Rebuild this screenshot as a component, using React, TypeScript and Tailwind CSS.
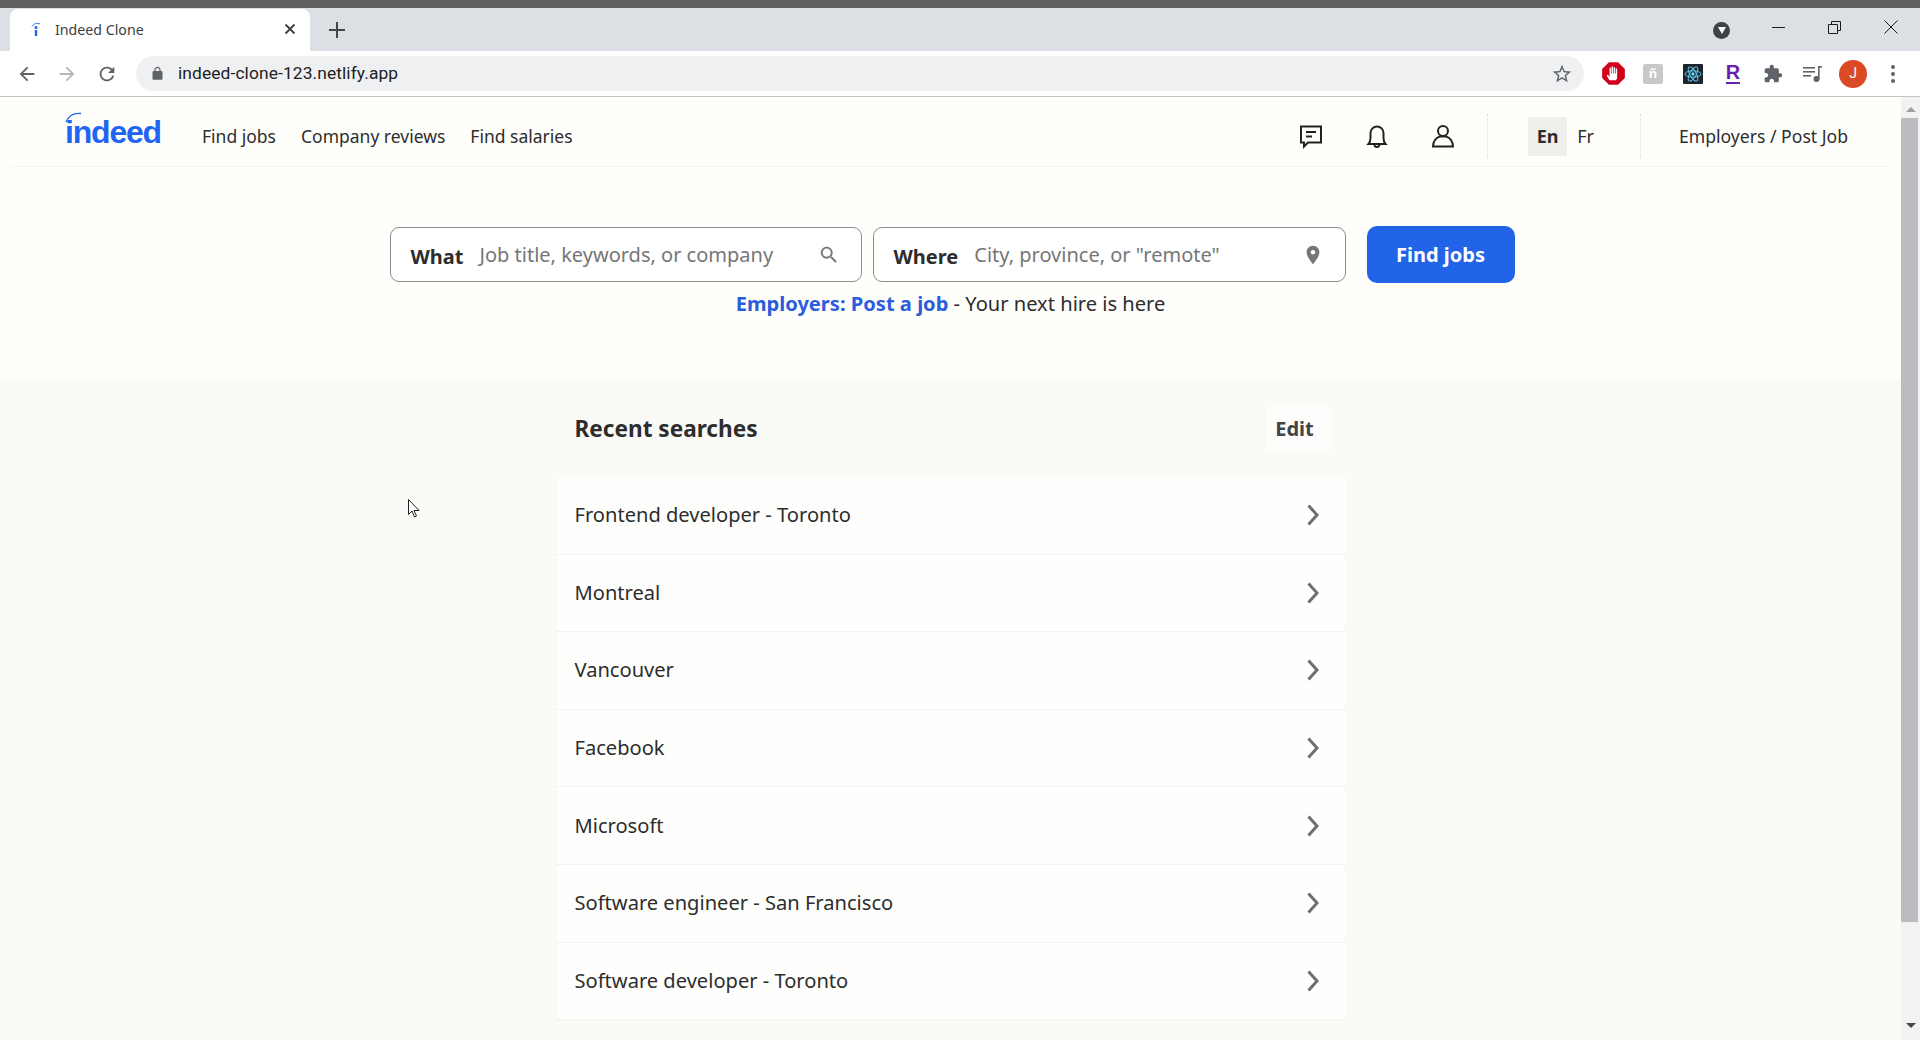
import React from 'react';

const RECENT = [
  'Frontend developer - Toronto',
  'Montreal',
  'Vancouver',
  'Facebook',
  'Microsoft',
  'Software engineer - San Francisco',
  'Software developer - Toronto',
];

function Icon({ d, className, fill = 'currentColor' }: { d: string; className?: string; fill?: string }) {
  return (
    <svg viewBox="0 0 24 24" className={className} fill={fill}>
      <path d={d} />
    </svg>
  );
}

const ARROW_BACK = 'M20 11H7.83l5.59-5.59L12 4l-8 8 8 8 1.41-1.41L7.83 13H20v-2z';
const ARROW_FORWARD = 'M4 11h12.17l-5.59-5.59L12 4l8 8-8 8-1.41-1.41L16.17 13H4v-2z';
const REFRESH =
  'M17.65 6.35C16.2 4.9 14.21 4 12 4c-4.42 0-7.99 3.58-7.99 8s3.57 8 7.99 8c3.73 0 6.84-2.55 7.73-6h-2.08c-.82 2.33-3.04 4-5.65 4-3.31 0-6-2.69-6-6s2.69-6 6-6c1.66 0 3.14.69 4.22 1.78L13 11h7V4l-2.35 2.35z';
const LOCK =
  'M18 8h-1V6c0-2.76-2.24-5-5-5S7 3.24 7 6v2H6c-1.1 0-2 .9-2 2v10c0 1.1.9 2 2 2h12c1.1 0 2-.9 2-2V10c0-1.1-.9-2-2-2zM9 6c0-1.66 1.34-3 3-3s3 1.34 3 3v2H9V6z';
const PUZZLE =
  'M20.5 11H19V7c0-1.1-.9-2-2-2h-4V3.5C13 2.12 11.88 1 10.5 1S8 2.12 8 3.5V5H4c-1.1 0-1.99.9-1.99 2v3.8H3.5c1.49 0 2.7 1.21 2.7 2.7s-1.21 2.7-2.7 2.7H2V20c0 1.1.9 2 2 2h3.8v-1.5c0-1.49 1.21-2.7 2.7-2.7 1.49 0 2.7 1.21 2.7 2.7V22H17c1.1 0 2-.9 2-2v-4h1.5c1.38 0 2.5-1.12 2.5-2.5S21.88 11 20.5 11z';
const SEARCH =
  'M15.5 14h-.79l-.28-.27C15.41 12.59 16 11.11 16 9.5 16 5.91 13.09 3 9.5 3S3 5.91 3 9.5 5.91 16 9.5 16c1.61 0 3.09-.59 4.23-1.57l.27.28v.79l5 4.99L20.49 19l-4.99-5zm-6 0C7.01 14 5 11.99 5 9.5S7.01 5 9.5 5 14 7.01 14 9.5 11.99 14 9.5 14z';
const PLACE =
  'M12 2C8.13 2 5 5.13 5 9c0 5.25 7 13 7 13s7-7.75 7-13c0-3.87-3.13-7-7-7zm0 9.5c-1.38 0-2.5-1.12-2.5-2.5s1.12-2.5 2.5-2.5 2.5 1.12 2.5 2.5-1.12 2.5-2.5 2.5z';
const STAR =
  'M22 9.24l-7.19-.62L12 2 9.19 8.63 2 9.24l5.46 4.73L5.82 21 12 17.27 18.18 21l-1.63-7.03L22 9.24zM12 15.4l-3.76 2.27 1-4.28-3.32-2.88 4.38-.38L12 6.1l1.71 4.04 4.38.38-3.32 2.88 1 4.28L12 15.4z';

function TabStrip() {
  return (
    <div className="flex h-[43px] bg-[#dcdfe3]">
      <div className="ml-[10px] mt-[1px] flex h-[42px] w-[300px] items-center rounded-t-lg bg-white pl-[18px] pr-[14px]">
        <svg viewBox="0 0 16 16" className="h-4 w-4 -translate-y-[1px]">
          <path d="M4 5.5C5.5 2.5 9 1.5 12 3" fill="none" stroke="#2164f3" strokeWidth="1" />
          <circle cx="8" cy="6.5" r="1.6" fill="#2164f3" />
          <rect x="6.8" y="9" width="2.4" height="6" fill="#2164f3" />
        </svg>
        <span className="ml-[11px] flex-1 font-['Noto_Sans',sans-serif] text-[14.2px] text-[#3c4043]">Indeed Clone</span>
        <svg viewBox="0 0 12 12" className="h-[12px] w-[12px] -translate-y-[1px] text-[#3c4043]" stroke="currentColor" strokeWidth="1.8">
          <path d="M1.5 1.5l9 9M10.5 1.5l-9 9" />
        </svg>
      </div>
      <svg viewBox="0 0 16 16" className="ml-[19px] mt-[14px] h-[16px] w-[16px] text-[#45474a]" stroke="currentColor" strokeWidth="2">
        <path d="M8 0v16M0 8h16" />
      </svg>
      <div className="flex-1" />
      <div className="mr-[190px] mt-[14px] flex h-[17px] w-[17px] items-center justify-center rounded-full bg-[#3f4244]">
        <div className="h-0 w-0 border-x-[4.5px] border-t-[7px] border-x-transparent border-t-white" />
      </div>
      <WindowControls />
    </div>
  );
}

function WindowControls() {
  return (
    <div className="absolute right-[22px] top-[20px] flex items-center gap-[43px] text-[#1c1c1c]">
      <div className="h-[1px] w-[13px] bg-current" />
      <svg viewBox="0 0 13 13" className="h-[13px] w-[13px]" fill="none" stroke="currentColor" strokeWidth="1">
        <path d="M.5 3.5h9v9h-9zM3.5 3.5v-3h9v9h-3" />
      </svg>
      <svg viewBox="0 0 14 14" className="h-[14px] w-[14px]" fill="none" stroke="currentColor" strokeWidth="1">
        <path d="M.5.5l13 13M13.5.5l-13 13" />
      </svg>
    </div>
  );
}

function ToolBtn({ children }: { children: React.ReactNode }) {
  return <div className="flex h-[40px] w-[40px] items-center justify-center">{children}</div>;
}

function Toolbar() {
  return (
    <div className="flex h-[46px] items-center border-b border-b-[#c4c4c4] bg-white pl-[7px] pr-[7px]">
      <ToolBtn><Icon d={ARROW_BACK} className="h-[22px] w-[22px] text-[#5f6368]" /></ToolBtn>
      <ToolBtn><Icon d={ARROW_FORWARD} className="h-[22px] w-[22px] text-[#b4b6b9]" /></ToolBtn>
      <ToolBtn><Icon d={REFRESH} className="h-[22px] w-[22px] text-[#5f6368]" /></ToolBtn>
      <div className="ml-[9px] flex h-[35px] w-[1448px] items-center rounded-full bg-[#eff0f1] pl-[14px] pr-[11px]">
        <Icon d={LOCK} className="h-[15px] w-[15px] text-[#5f6368]" />
        <span className="ml-[13px] flex-1 font-['Roboto',sans-serif] text-[17.4px] tracking-[0.1px] text-[#202124]">indeed-clone-123.netlify.app</span>
        <Icon d={STAR} className="h-[22px] w-[22px] text-[#5f6368]" />
      </div>
      <div className="ml-[9px] flex">
        <ToolBtn>
          <svg viewBox="0 0 22 22" className="h-[25px] w-[25px]">
            <path d="M7 1h8l6 6v8l-6 6H7l-6-6V7z" fill="#d0021b" />
            <path d="M7.5 17c-1-1.500-2-3-2.500-4.500l1-.5 1.500 2V6h1.200v5h.6V4.800h1.300V11h.6V5.400h1.200V11h.6V6.500h1.200V14c0 1.500-.6 2.300-1.200 3z" fill="#fff" />
          </svg>
        </ToolBtn>
        <ToolBtn>
          <div className="flex h-[20px] w-[20px] items-center justify-center rounded-[2px] bg-[#c8c8c8] text-[13px] font-bold text-white">ñ</div>
        </ToolBtn>
        <ToolBtn>
          <svg viewBox="0 0 20 20" className="h-[20px] w-[20px]">
            <rect width="20" height="20" rx="1" fill="#20232a" />
            <circle cx="10" cy="10" r="1.700" fill="#61dafb" />
            <g fill="none" stroke="#61dafb" strokeWidth="0.900">
              <ellipse cx="10" cy="10" rx="8" ry="3.200" />
              <ellipse cx="10" cy="10" rx="8" ry="3.200" transform="rotate(60 10 10)" />
              <ellipse cx="10" cy="10" rx="8" ry="3.200" transform="rotate(120 10 10)" />
            </g>
          </svg>
        </ToolBtn>
        <ToolBtn>
          <div className="flex flex-col items-center">
            <span className="font-['Liberation_Sans',sans-serif] text-[20px] font-bold leading-[19px] text-[#6a1fa8]">R</span>
            <div className="h-[2px] w-[14px] bg-[#6a1fa8]" />
          </div>
        </ToolBtn>
        <ToolBtn><Icon d={PUZZLE} className="h-[20px] w-[20px] text-[#5f6368]" /></ToolBtn>
        <ToolBtn>
          <svg viewBox="0 0 20 20" className="h-[20px] w-[20px] text-[#5f6368]" fill="currentColor">
            <rect x="0" y="3" width="12" height="1.600" />
            <rect x="0" y="7" width="12" height="1.600" />
            <rect x="0" y="11" width="8" height="1.600" />
            <rect x="15" y="2" width="1.600" height="13" />
            <rect x="15" y="2" width="4" height="1.600" />
            <circle cx="13.500" cy="15" r="3" />
          </svg>
        </ToolBtn>
        <ToolBtn>
          <div className="flex h-[28px] w-[28px] items-center justify-center rounded-full bg-[#db4a26] font-['Roboto',sans-serif] text-[14px] text-white">J</div>
        </ToolBtn>
        <ToolBtn>
          <div className="flex flex-col gap-[3px]">
            <div className="h-[4px] w-[4px] rounded-full bg-[#5f6368]" />
            <div className="h-[4px] w-[4px] rounded-full bg-[#5f6368]" />
            <div className="h-[4px] w-[4px] rounded-full bg-[#5f6368]" />
          </div>
        </ToolBtn>
      </div>
    </div>
  );
}

function Logo() {
  return (
    <div className="relative w-[97px] -translate-y-[3px]">
      <svg viewBox="0 0 30 14" className="absolute left-[0px] top-[-6px] h-[14px] w-[30px]" fill="none">
        <path d="M1 11C4 4 9 1.500 16 2.500" stroke="#2164f3" strokeWidth="1.300" />
      </svg>
      <span className="font-['Liberation_Sans',sans-serif] text-[32px] font-bold leading-[30px] tracking-[-1.2px] text-[#2164f3]">indeed</span>
    </div>
  );
}

function NavBar() {
  return (
    <div className="mx-[12px] flex h-[70px] items-center border-b border-dotted border-b-[#e4e4e4] pl-[53px] pr-[41px] pt-[9px]">
      <Logo />
      <nav className="ml-[40px] flex gap-[25px] text-[17.5px] text-[#2d2d2d]">
        <a>Find jobs</a>
        <a>Company reviews</a>
        <a>Find salaries</a>
      </nav>
      <div className="flex-1" />
      <div className="flex items-center text-[#222]">
        <div className="flex gap-[40px]">
          <svg viewBox="0 0 26 26" className="h-[26px] w-[26px]" fill="none" stroke="currentColor" strokeWidth="2">
            <path d="M3 3.500h20v16H10l-4 4v-4H3zM8 9h10M8 13.500h6" />
          </svg>
          <svg viewBox="0 0 26 26" className="h-[26px] w-[26px]" fill="none" stroke="currentColor" strokeWidth="2">
            <path d="M4.500 21c1.500-1.500 2-3 2-6V10a6.500 6.500 0 0 1 13 0v5c0 3 .5 4.500 2 6zM10.500 21.500a2.500 2.500 0 0 0 5 0" />
          </svg>
          <svg viewBox="0 0 26 26" className="h-[26px] w-[26px]" fill="none" stroke="currentColor" strokeWidth="2">
            <circle cx="13" cy="8" r="5" />
            <path d="M3 23.500c0-5 3-9 7-10h6c4 1 7 5 7 10z" />
          </svg>
        </div>
        <div className="ml-[31px] h-[44px] border-l border-dotted border-l-[#d8d8d8]" />
        <div className="ml-[40px] flex h-[39px] w-[39px] items-center justify-center bg-[#efefec] text-[18px] font-bold text-[#2d2d2d]">En</div>
        <span className="ml-[10px] text-[18px] text-[#2d2d2d]">Fr</span>
        <div className="ml-[46px] h-[44px] border-l border-dotted border-l-[#d8d8d8]" />
        <a className="ml-[38px] text-[17.6px] text-[#2d2d2d]">Employers / Post Job</a>
      </div>
    </div>
  );
}

function SearchField({ label, placeholder, icon, width }: { label: string; placeholder: string; icon: string; width: string }) {
  return (
    <div className={`flex h-[55px] items-center rounded-[9px] border border-[#8d8d90] bg-white pl-[20px] pr-[21px] ${width}`}>
      <span className="mt-[5px] text-[20px] font-bold text-[#2d2d2d]">{label}</span>
      <span className="ml-[16px] flex-1 text-[20px] text-[#767676]">{placeholder}</span>
      <Icon d={icon} className="h-[22px] w-[22px] text-[#767676]" />
    </div>
  );
}

function Hero() {
  return (
    <section className="h-[213px] bg-[#fefefb] pt-[60px]">
      <div className="flex justify-center pl-[3px]">
        <SearchField label="What" placeholder="Job title, keywords, or company" icon={SEARCH} width="w-[472px]" />
        <div className="ml-[11px]">
          <SearchField label="Where" placeholder={'City, province, or "remote"'} icon={PLACE} width="w-[473px]" />
        </div>
        <button className="ml-[21px] h-[57px] w-[148px] -translate-y-[1px] rounded-[10px] bg-[#2164e8] text-[20px] font-bold text-white">Find jobs</button>
      </div>
      <p className="mt-[5px] text-center text-[20.1px] text-[#2d2d2d]">
        <a className="font-bold text-[#2a5cdc]">Employers: Post a job</a> - Your next hire is here
      </p>
    </section>
  );
}

function RecentSearches() {
  return (
    <section className="min-h-0 flex-1 bg-[#fafaf7]">
      <div className="mx-auto w-[790px]">
        <div className="flex h-[97px] items-center justify-between pl-[19px] pr-[15px]">
          <h2 className="text-[22.6px] font-bold text-[#2d2d2d]">Recent searches</h2>
          <button className="h-[46px] w-[65px] rounded-[4px] bg-[#fdfdfb] pr-[7px] text-[20px] font-bold text-[#424448]">Edit</button>
        </div>
        <ul className="mx-[1px] bg-[#fefefc]">
          {RECENT.map((term) => (
            <li key={term} className="flex h-[77.6px] items-center justify-between border-b border-dotted border-b-[#e6e6e6] pl-[18px] pr-[26px] text-[20.1px] text-[#2d2d2d]">
              {term}
              <svg viewBox="0 0 12 22" className="h-[22px] w-[12px] text-[#6f6f72]" fill="none" stroke="currentColor" strokeWidth="3">
                <path d="M1.500 1.500L10 11l-8.500 9.500" />
              </svg>
            </li>
          ))}
        </ul>
      </div>
    </section>
  );
}

function Scrollbar() {
  return (
    <div className="flex w-[19px] flex-col bg-[#f2f2f0]">
      <div className="flex h-[21px] items-center justify-center pt-[4px]">
        <div className="h-0 w-0 border-x-[5px] border-b-[5px] border-x-transparent border-b-[#a0a0a0]" />
      </div>
      <div className="h-[804px] w-[17px] bg-[#bcbcc0]" />
      <div className="flex-1" />
      <div className="flex h-[18px] items-start justify-center pt-[1px]">
        <div className="h-0 w-0 border-x-[5px] border-t-[5px] border-x-transparent border-t-[#45454d]" />
      </div>
    </div>
  );
}

export default function App() {
  return (
    <div className="relative flex h-[1040px] w-[1920px] flex-col overflow-hidden bg-white font-['Noto_Sans',sans-serif]">
      <div className="h-[8px] bg-[#5f6062]" />
      <TabStrip />
      <Toolbar />
      <div className="flex min-h-0 flex-1">
        <main className="flex min-w-0 flex-1 flex-col bg-[#fefefb]">
          <NavBar />
          <Hero />
          <RecentSearches />
        </main>
        <Scrollbar />
      </div>
      {/* mouse cursor caught in the capture */}
      <svg viewBox="0 0 12 19" className="absolute left-[408px] top-[499px] h-[19px] w-[12px]">
        <path d="M.5.5v15l3.500-3.500 2.500 6 2-1-2.500-5.500h5z" fill="#fff" stroke="#222" strokeWidth="1" />
      </svg>
    </div>
  );
}
